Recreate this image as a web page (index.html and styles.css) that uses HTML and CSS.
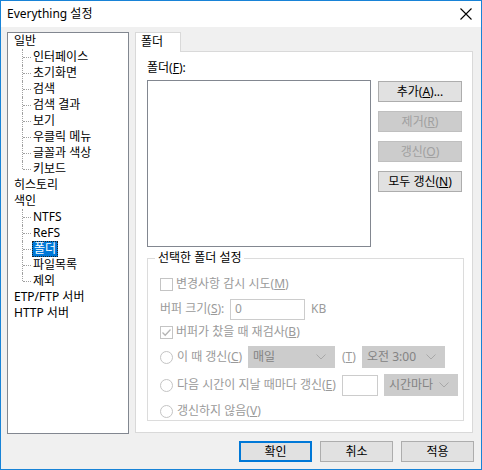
FILE: index.html
```html
<!DOCTYPE html>
<html lang="ko">
<head>
<meta charset="utf-8">
<title>Everything 설정</title>
<link rel="stylesheet" href="styles.css">
</head>
<body>
<div class="window">
  <div class="titlebar">
    <span class="title">Everything 설정</span>
    <svg class="close" width="12" height="12" viewBox="0 0 12 12"><path d="M0.5 0.5L11.5 11.5M11.5 0.5L0.5 11.5" stroke="#000" stroke-width="1.1" fill="none"/></svg>
  </div>
  <div class="main">
    <div class="tree">
      <div class="node">일반</div>
      <div class="children">
        <div class="leaf"><span class="lbl">인터페이스</span></div>
        <div class="leaf"><span class="lbl">초기화면</span></div>
        <div class="leaf"><span class="lbl">검색</span></div>
        <div class="leaf"><span class="lbl">검색 결과</span></div>
        <div class="leaf"><span class="lbl">보기</span></div>
        <div class="leaf"><span class="lbl">우클릭 메뉴</span></div>
        <div class="leaf"><span class="lbl">글꼴과 색상</span></div>
        <div class="leaf"><span class="lbl">키보드</span></div>
      </div>
      <div class="node">히스토리</div>
      <div class="node">색인</div>
      <div class="children">
        <div class="leaf"><span class="lbl">NTFS</span></div>
        <div class="leaf"><span class="lbl">ReFS</span></div>
        <div class="leaf"><span class="lbl sel">폴더</span></div>
        <div class="leaf"><span class="lbl">파일목록</span></div>
        <div class="leaf"><span class="lbl">제외</span></div>
      </div>
      <div class="node">ETP/FTP 서버</div>
      <div class="node">HTTP 서버</div>
    </div>
    <div class="tabs">
      <div class="tabhead"><div class="tab">폴더</div></div>
      <div class="panel">
        <div class="label">폴더(<u>F</u>):</div>
        <div class="listrow">
          <div class="listbox"></div>
          <div class="btncol">
            <div class="btn">추가(<u>A</u>)...</div>
            <div class="btn dis">제거(<u>R</u>)</div>
            <div class="btn dis">갱신(<u>O</u>)</div>
            <div class="btn">모두 갱신(<u>N</u>)</div>
          </div>
        </div>
        <div class="group">
          <div class="gtitle">선택한 폴더 설정</div>
          <div class="row r1"><span class="chk"></span><span class="dtext">변경사항 감시 시도(<u>M</u>)</span></div>
          <div class="row r2"><span class="dtext w-buf">버퍼 크기(<u>S</u>):</span><span class="input in-buf">0</span><span class="dtext kb">KB</span></div>
          <div class="row r3"><span class="chk checked"><svg width="11" height="11" viewBox="0 0 11 11"><path d="M1.5 5.5L4.2 8.2L9.5 2.5" stroke="#b5b5b5" stroke-width="1.3" fill="none"/></svg></span><span class="dtext">버퍼가 찼을 때 재검사(<u>B</u>)</span></div>
          <div class="row r4"><span class="radio"></span><span class="dtext w-c">이 때 갱신(<u>C</u>)</span><span class="combo cb-day"><span>매일</span><svg width="10" height="6" viewBox="0 0 10 6"><path d="M0.5 0.5L5 5L9.5 0.5" stroke="#a8a8a8" fill="none"/></svg></span><span class="dtext w-t">(<u>T</u>)</span><span class="combo cb-time"><span>오전 3:00</span><svg width="10" height="6" viewBox="0 0 10 6"><path d="M0.5 0.5L5 5L9.5 0.5" stroke="#a8a8a8" fill="none"/></svg></span></div>
          <div class="row r5"><span class="radio"></span><span class="dtext w-e">다음 시간이 지날 때마다 갱신(<u>E</u>)</span><span class="input in-hr"></span><span class="combo cb-hr"><span>시간마다</span><svg width="10" height="6" viewBox="0 0 10 6"><path d="M0.5 0.5L5 5L9.5 0.5" stroke="#a8a8a8" fill="none"/></svg></span></div>
          <div class="row r6"><span class="radio"></span><span class="dtext">갱신하지 않음(<u>V</u>)</span></div>
        </div>
      </div>
    </div>
  </div>
  <div class="footer">
    <div class="btn fbtn default">확인</div>
    <div class="btn fbtn">취소</div>
    <div class="btn fbtn">적용</div>
  </div>
</div>
</body>
</html>
```

FILE: styles.css
```css
* { box-sizing: border-box; }
html, body { margin: 0; padding: 0; }
body {
  font-family: "Noto Sans", "Noto Sans CJK KR", sans-serif;
  font-size: 12px;
  line-height: 16px;
  color: #000;
  background: #f0f0f0;
}
u { text-decoration: underline; text-underline-offset: 1px; }
.window {
  width: 482px;
  height: 470px;
  border: 1px solid #1883d7;
  background: #f0f0f0;
  display: flex;
  flex-direction: column;
}
.titlebar {
  height: 26px;
  background: #fff;
  display: flex;
  align-items: center;
  justify-content: space-between;
  padding: 0 9px 0 6px;
  flex: none;
}
.title { font-size: 12px; }
.close { display: block; }
.main {
  display: flex;
  padding: 5px 7px 0 6px;
  flex: none;
}
.tree {
  width: 122px;
  height: 402px;
  background: #fff;
  border: 1px solid #828790;
  padding: 0 0 0 6px;
  flex: none;
}
.node { height: 16px; line-height: 16px; white-space: nowrap; }
.children { padding-left: 8px; }
.leaf {
  position: relative;
  height: 16px;
  padding-left: 10px;
  white-space: nowrap;
}
.leaf::before {
  content: "";
  position: absolute;
  left: 0;
  top: 0;
  height: 16px;
  border-left: 1px dotted #a0a0a0;
}
.leaf:last-child::before { height: 8px; }
.leaf::after {
  content: "";
  position: absolute;
  left: 1px;
  top: 8px;
  width: 8px;
  border-top: 1px dotted #a0a0a0;
}
.lbl { display: inline-block; height: 16px; line-height: 16px; padding: 0 1px; }
.lbl.sel {
  background: #0078d7;
  color: #fff;
  outline: 1px dotted #222;
  outline-offset: -1px;
  padding: 0 2px;
}
.tabs {
  margin-left: 6px;
  width: 338px;
  flex: none;
  display: flex;
  flex-direction: column;
}
.tabhead { height: 19px; display: flex; }
.tab {
  width: 46px;
  height: 20px;
  border: 1px solid #d9d9d9;
  border-bottom: none;
  background: #fff;
  padding-left: 5px;
  line-height: 18px;
  position: relative;
  z-index: 1;
}
.panel {
  height: 382px;
  background: #fff;
  border: 1px solid #d9d9d9;
  padding: 8px 0 0 11px;
}
.label { height: 16px; }
.listrow { display: flex; margin-top: 4px; }
.listbox {
  width: 224px;
  height: 167px;
  border: 1px solid #828790;
  background: #fff;
  flex: none;
}
.btncol {
  margin-left: 7px;
  padding-top: 1px;
  display: flex;
  flex-direction: column;
  gap: 9px;
}
.btn {
  width: 84px;
  height: 21px;
  background: #e1e1e1;
  border: 1px solid #adadad;
  display: flex;
  align-items: center;
  justify-content: center;
  line-height: 16px;
  white-space: nowrap;
}
.btn.dis {
  background: #cccccc;
  border-color: #bfbfbf;
  color: #a0a0a0;
}
.group {
  margin-top: 11px;
  width: 317px;
  height: 163px;
  border: 1px solid #dcdcdc;
  padding-left: 12px;
}
.gtitle {
  display: inline-block;
  margin-top: -9px;
  margin-left: -5px;
  padding: 0 2px 0 3px;
  background: #fff;
  height: 16px;
  line-height: 16px;
  vertical-align: top;
}
.row { display: flex; align-items: center; white-space: nowrap; }
.r1 { height: 16px; margin-top: 1px; }
.r2 { height: 22px; margin-top: 6px; }
.r3 { height: 16px; margin-top: 4px; }
.r4 { height: 22px; margin-top: 6px; }
.r5 { height: 22px; margin-top: 6px; }
.r6 { height: 16px; margin-top: 7px; }
.dtext { color: #9a9a9a; }
.chk {
  width: 13px;
  height: 13px;
  border: 1px solid #c4c4c4;
  background: #fff;
  margin-right: 3px;
  display: flex;
  align-items: center;
  justify-content: center;
  flex: none;
}
.chk svg { display: block; }
.radio {
  width: 13px;
  height: 13px;
  border: 1px solid #c4c4c4;
  border-radius: 50%;
  background: #fff;
  margin-right: 4px;
  flex: none;
}
.w-buf { width: 70px; }
.input {
  height: 21px;
  border: 1px solid #cccccc;
  background: #fff;
  color: #9a9a9a;
  padding-left: 4px;
  display: flex;
  align-items: center;
  flex: none;
}
.in-buf { width: 75px; }
.kb { margin-left: 6px; }
.w-c { width: 71px; }
.combo {
  height: 22px;
  background: #cccccc;
  border: 1px solid #cccccc;
  color: #838383;
  display: flex;
  align-items: center;
  justify-content: space-between;
  padding: 0 8px 0 4px;
  flex: none;
}
.combo svg { display: block; }
.cb-day { width: 87px; }
.w-t { width: 27px; padding-left: 7px; }
.cb-time { width: 83px; }
.w-e { width: 165px; }
.in-hr { width: 36px; }
.cb-hr { width: 74px; margin-left: 6px; }
.footer {
  display: flex;
  justify-content: flex-end;
  gap: 8px;
  padding-right: 7px;
  margin-top: 7px;
}
.fbtn { width: 73px; }
.fbtn.default { border: 2px solid #0078d7; }
```
